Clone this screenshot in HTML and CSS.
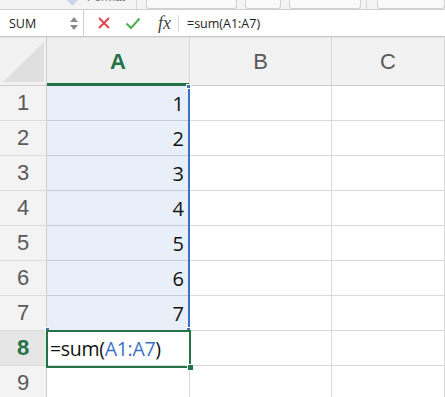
FILE: index.html
```html
<!DOCTYPE html>
<html>
<head>
<meta charset="utf-8">
<link rel="stylesheet" href="styles.css">
</head>
<body>
<div class="app">
  <div class="ribbon">
    <div class="rb rb1"><span class="diamond"></span><span class="fmt">Format</span></div>
    <div class="rsep"></div>
    <div class="rb rb2"></div>
    <div class="rb rb3"></div>
    <div class="rb rb4"></div>
    <div class="rsep"></div>
    <div class="rb rb5"></div>
  </div>
  <div class="fbar">
    <div class="namebox">
      <span class="name">SUM</span>
      <span class="spin"><span class="up"></span><span class="down"></span></span>
    </div>
    <div class="ficons">
      <svg class="ic ic-x" width="14" height="14" viewBox="0 0 14 14"><path d="M2 2L12 12M12 2L2 12" stroke="#e0474c" stroke-width="2" fill="none"/></svg>
      <svg class="ic ic-ok" width="16" height="14" viewBox="0 0 16 14"><path d="M1.5 7.5L6 12L14.5 2.5" stroke="#4caf50" stroke-width="2" fill="none"/></svg>
      <span class="fx">fx</span>
    </div>
    <div class="ftext">=sum(A1:A7)</div>
  </div>
  <div class="sheet">
    <div class="grid">
      <div class="corner"><span class="tri"></span></div>
      <div class="ch sel">A</div>
      <div class="ch">B</div>
      <div class="ch">C</div>

      <div class="rh">1</div><div class="c a">1</div><div class="c"></div><div class="c"></div>
      <div class="rh">2</div><div class="c a">2</div><div class="c"></div><div class="c"></div>
      <div class="rh">3</div><div class="c a">3</div><div class="c"></div><div class="c"></div>
      <div class="rh">4</div><div class="c a">4</div><div class="c"></div><div class="c"></div>
      <div class="rh">5</div><div class="c a">5</div><div class="c"></div><div class="c"></div>
      <div class="rh">6</div><div class="c a">6</div><div class="c"></div><div class="c"></div>
      <div class="rh">7</div><div class="c a">7</div><div class="c"></div><div class="c"></div>
      <div class="rh act">8</div><div class="c edit">=sum(<span class="ref">A1:A7</span>)</div><div class="c"></div><div class="c"></div>
      <div class="rh">9</div><div class="c"></div><div class="c"></div><div class="c"></div>
    </div>
    <div class="rng-right"></div>
    <div class="sq sq-tr"></div>
    <div class="sq sq-bl"></div>
    <div class="sq sq-br"></div>
    <div class="active"></div>
    <div class="handle"></div>
  </div>
</div>
</body>
</html>
```

FILE: styles.css
```css
* { box-sizing: border-box; }
html, body { margin: 0; padding: 0; background: #fff; }
.app { width: 445px; height: 397px; overflow: hidden; font-family: "Liberation Sans", Arial, sans-serif; }

.ribbon { height: 9px; background: #f4f4f4; display: flex; align-items: flex-end; position: relative; overflow: hidden; }
.rb { height: 12px; background: #f9f9f9; border: 1px solid #d2d2d2; border-top: none; border-radius: 0 0 3px 3px; align-self: flex-end; position: relative; }
.rb1 { width: 70px; margin-left: 63px; border: none; background: transparent; }
.diamond { position: absolute; left: 5px; top: -2px; width: 9px; height: 9px; background: #c9d6e8; transform: rotate(45deg); }
.fmt { position: absolute; left: 24px; top: -7px; font-size: 12px; line-height: 14px; color: #777; }
.rsep { width: 1px; height: 9px; background: #d6d6d6; margin: 0 5px; }
.rb2 { width: 94px; margin-left: 4px; }
.rb3 { width: 37px; margin-left: 8px; }
.rb4 { width: 74px; margin-left: 8px; }
.rb5 { width: 70px; margin-left: 5px; }

.fbar { height: 28px; border-top: 1px solid #cfcfcf; border-bottom: 1px solid #c6c6c6; background: #fff; display: flex; align-items: center; }
.namebox { width: 84px; height: 100%; border-right: 1px solid #cfcfcf; display: flex; align-items: center; justify-content: space-between; padding: 0 5px 0 9px; }
.name { font-family: "Open Sans", sans-serif; font-size: 12.5px; color: #222; }
.spin { display: flex; flex-direction: column; gap: 3px; }
.up { width: 0; height: 0; border-left: 4px solid transparent; border-right: 4px solid transparent; border-bottom: 5px solid #8a8a8a; }
.down { width: 0; height: 0; border-left: 4px solid transparent; border-right: 4px solid transparent; border-top: 5px solid #8a8a8a; }
.ficons { display: flex; align-items: center; height: 17px; padding-left: 13px; border-right: 1px solid #d8d8d8; padding-right: 7px; }
.ic-x { margin-right: 14px; }
.ic-ok { margin-right: 17px; }
.fx { font-family: "Liberation Serif", serif; font-style: italic; font-size: 18px; line-height: 17px; color: #444; }
.ftext { padding-left: 8px; font-family: "Open Sans", sans-serif; font-size: 12.5px; color: #222; }

.sheet { position: relative; margin-top: 0; }
.grid { display: grid; grid-template-columns: 47px 143px 142px 1fr; grid-template-rows: 49px repeat(9, 35px); }
.corner { background: #f2f2f2; border-right: 1px solid #cdcdcd; border-bottom: 1px solid #cdcdcd; position: relative; border-top: 1px solid #e4e4e4; }
.tri { position: absolute; left: 3px; top: 4px; width: 41px; height: 40px; background: #dfdfdf; clip-path: polygon(100% 0, 100% 100%, 0 100%); }
.ch { background: #f2f2f2; border-right: 1px solid #d6d6d6; border-bottom: 1px solid #cdcdcd; border-top: 1px solid #e4e4e4; display: flex; align-items: center; justify-content: center; font-size: 22px; color: #5a5a5a; padding-top: 1px; }
.ch.sel { color: #237346; font-weight: bold; border-bottom: 3px solid #237346; background: #efefef; padding-top: 3px; }
.rh { background: #f3f3f3; border-right: 1px solid #cdcdcd; border-bottom: 1px solid #dcdcdc; display: flex; align-items: center; justify-content: center; font-size: 22px; color: #5a5a5a; }
.rh.act { color: #237346; font-weight: bold; background: #e6e6e6; }
.c { border-right: 1px solid #d9d9d9; border-bottom: 1px solid #d9d9d9; display: flex; align-items: center; font-family: "Open Sans", sans-serif; font-size: 20px; color: #111; }
.c.a { background: #e8eff9; justify-content: flex-end; padding-right: 5px; border-bottom-color: #c9ced6; }
.c.edit { padding-left: 3px; font-size: 19.5px; letter-spacing: -0.3px; }
.ref { color: #3a6fc5; }

.rng-right { position: absolute; left: 188px; top: 51px; width: 2px; height: 243px; background: #3b70c6; }
.sq { position: absolute; width: 5px; height: 5px; background: #3b70c6; border: 1px solid #fff; }
.sq-tr { left: 186px; top: 47px; }
.sq-bl { left: 45px; top: 290px; }
.sq-br { left: 186px; top: 290px; }
.active { position: absolute; left: 46px; top: 293px; width: 145px; height: 38px; border: 2px solid #237346; }
.handle { position: absolute; left: 187px; top: 327px; width: 7px; height: 7px; background: #237346; border: 1px solid #fff; }
```
